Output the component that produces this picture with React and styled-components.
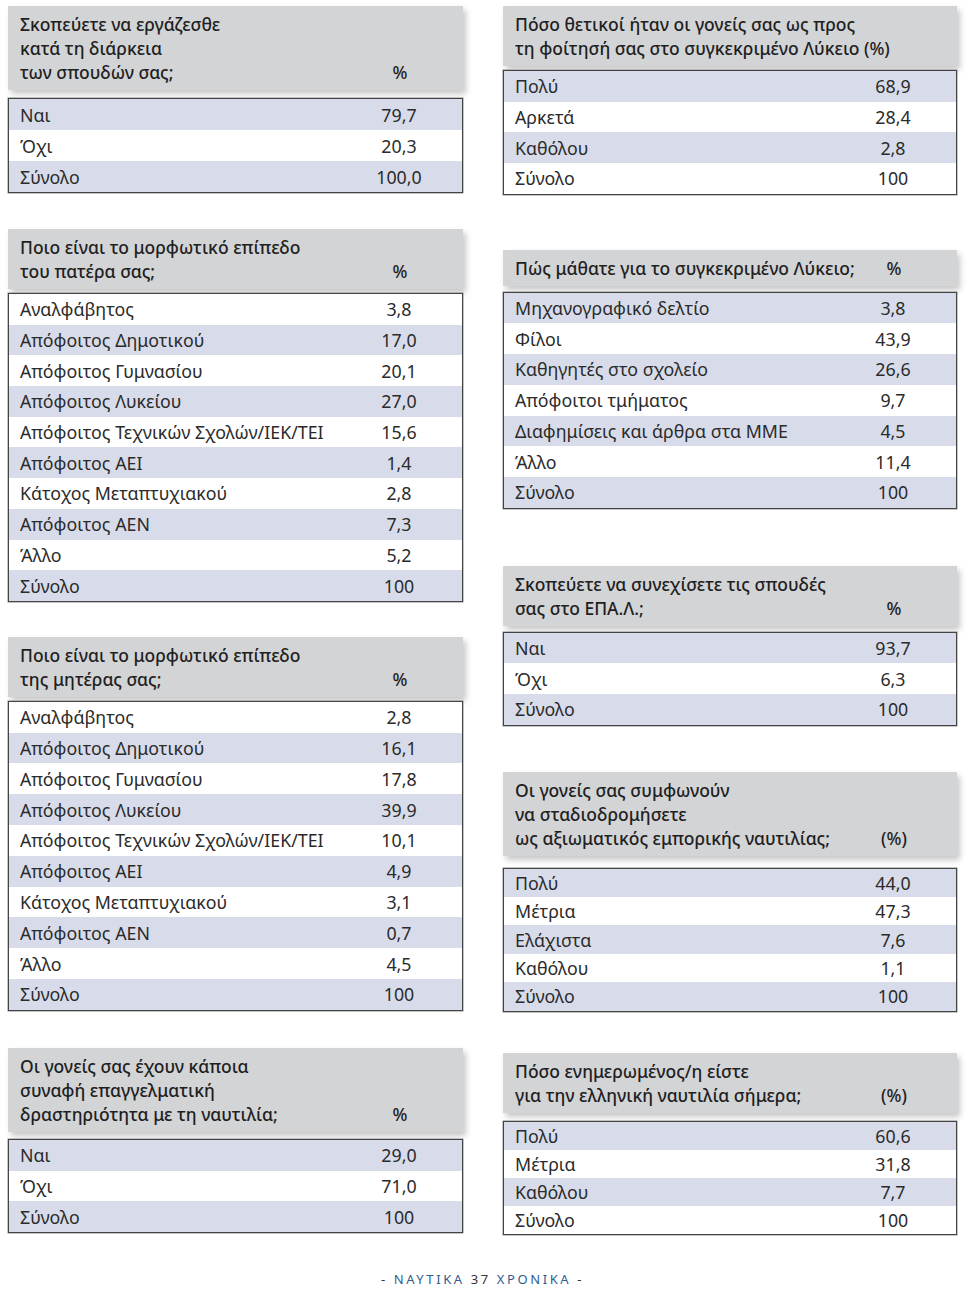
import React from 'react';
import styled, { createGlobalStyle } from 'styled-components';

const GlobalStyle = createGlobalStyle`
  body {
    margin: 0;
    background: #fff;
    font-family: 'Noto Sans', 'Open Sans', sans-serif;
    color: #2a2a2a;
  }
`;

const leftTables = [
  {
    title: ['Σκοπεύετε να εργάζεσθε', 'κατά τη διάρκεια', 'των σπουδών σας;'],
    unit: '%',
    top: 0,
    gap: 8,
    rowH: 31,
    stripe: 0,
    rows: [
      ['Ναι', '79,7'],
      ['Όχι', '20,3'],
      ['Σύνολο', '100,0']
    ]
  },
  {
    title: ['Ποιο είναι το μορφωτικό επίπεδο', 'του πατέρα σας;'],
    unit: '%',
    top: 36,
    gap: 4,
    rowH: 30.7,
    stripe: 1,
    rows: [
      ['Αναλφάβητος', '3,8'],
      ['Απόφοιτος Δημοτικού', '17,0'],
      ['Απόφοιτος Γυμνασίου', '20,1'],
      ['Απόφοιτος Λυκείου', '27,0'],
      ['Απόφοιτος Τεχνικών Σχολών/ΙΕΚ/ΤΕΙ', '15,6'],
      ['Απόφοιτος ΑΕΙ', '1,4'],
      ['Κάτοχος Μεταπτυχιακού', '2,8'],
      ['Απόφοιτος ΑΕΝ', '7,3'],
      ['Άλλο', '5,2'],
      ['Σύνολο', '100']
    ]
  },
  {
    title: ['Ποιο είναι το μορφωτικό επίπεδο', 'της μητέρας σας;'],
    unit: '%',
    top: 35,
    gap: 4,
    rowH: 30.8,
    stripe: 1,
    rows: [
      ['Αναλφάβητος', '2,8'],
      ['Απόφοιτος Δημοτικού', '16,1'],
      ['Απόφοιτος Γυμνασίου', '17,8'],
      ['Απόφοιτος Λυκείου', '39,9'],
      ['Απόφοιτος Τεχνικών Σχολών/ΙΕΚ/ΤΕΙ', '10,1'],
      ['Απόφοιτος ΑΕΙ', '4,9'],
      ['Κάτοχος Μεταπτυχιακού', '3,1'],
      ['Απόφοιτος ΑΕΝ', '0,7'],
      ['Άλλο', '4,5'],
      ['Σύνολο', '100']
    ]
  },
  {
    title: [
      'Οι γονείς σας έχουν κάποια',
      'συναφή επαγγελματική',
      'δραστηριότητα με τη ναυτιλία;'
    ],
    unit: '%',
    top: 37,
    gap: 7,
    rowH: 30.7,
    stripe: 0,
    rows: [
      ['Ναι', '29,0'],
      ['Όχι', '71,0'],
      ['Σύνολο', '100']
    ]
  }
];

const rightTables = [
  {
    title: [
      'Πόσο θετικοί ήταν οι γονείς σας ως προς',
      'τη φοίτησή σας στο συγκεκριμένο Λύκειο (%)'
    ],
    unit: null,
    top: 0,
    gap: 4,
    rowH: 30.7,
    stripe: 0,
    rows: [
      ['Πολύ', '68,9'],
      ['Αρκετά', '28,4'],
      ['Καθόλου', '2,8'],
      ['Σύνολο', '100']
    ]
  },
  {
    title: ['Πώς μάθατε για το συγκεκριμένο Λύκειο;'],
    unit: '%',
    top: 55,
    gap: 6,
    rowH: 30.7,
    stripe: 0,
    rows: [
      ['Μηχανογραφικό δελτίο', '3,8'],
      ['Φίλοι', '43,9'],
      ['Καθηγητές στο σχολείο', '26,6'],
      ['Απόφοιτοι τμήματος', '9,7'],
      ['Διαφημίσεις και άρθρα στα ΜΜΕ', '4,5'],
      ['Άλλο', '11,4'],
      ['Σύνολο', '100']
    ]
  },
  {
    title: ['Σκοπεύετε να συνεχίσετε τις σπουδές', 'σας στο ΕΠΑ.Λ.;'],
    unit: '%',
    top: 57,
    gap: 6,
    rowH: 30.7,
    stripe: 0,
    rows: [
      ['Ναι', '93,7'],
      ['Όχι', '6,3'],
      ['Σύνολο', '100']
    ]
  },
  {
    title: [
      'Οι γονείς σας συμφωνούν',
      'να σταδιοδρομήσετε',
      'ως αξιωματικός εμπορικής ναυτιλίας;'
    ],
    unit: '(%)',
    top: 46,
    gap: 12,
    rowH: 28.4,
    stripe: 0,
    rows: [
      ['Πολύ', '44,0'],
      ['Μέτρια', '47,3'],
      ['Ελάχιστα', '7,6'],
      ['Καθόλου', '1,1'],
      ['Σύνολο', '100']
    ]
  },
  {
    title: ['Πόσο ενημερωμένος/η είστε', 'για την ελληνική ναυτιλία σήμερα;'],
    unit: '(%)',
    top: 41,
    gap: 8,
    rowH: 28,
    stripe: 0,
    rows: [
      ['Πολύ', '60,6'],
      ['Μέτρια', '31,8'],
      ['Καθόλου', '7,7'],
      ['Σύνολο', '100']
    ]
  }
];

const StatTable = ({ table }) => (
  <Card $top={table.top}>
    <Header>
      <Title>
        {table.title.map((line) => (
          <div key={line}>{line}</div>
        ))}
      </Title>
      {table.unit && <Unit>{table.unit}</Unit>}
    </Header>
    <Table $gap={table.gap}>
      {table.rows.map(([label, value], i) => (
        <Row key={label} $h={table.rowH} $striped={i % 2 === table.stripe}>
          <span>{label}</span>
          <Value>{value}</Value>
        </Row>
      ))}
    </Table>
  </Card>
);

const App = () => (
  <>
    <GlobalStyle />
    <Page>
      <Columns>
        <Column>
          {leftTables.map((t) => (
            <StatTable key={t.title.join(' ')} table={t} />
          ))}
        </Column>
        <Column>
          {rightTables.map((t) => (
            <StatTable key={t.title.join(' ')} table={t} />
          ))}
        </Column>
      </Columns>
      <Footer>
        - <Blue>ΝΑΥΤΙΚΑ</Blue> 37 <Blue>ΧΡΟΝΙΚΑ</Blue> -
      </Footer>
    </Page>
  </>
);

const Page = styled.main`
  width: 978px;
  height: 1291px;
  box-sizing: border-box;
  padding: 6px 21px 3px 8px;
  display: flex;
  flex-direction: column;
  overflow: hidden;
`;

const Columns = styled.div`
  display: grid;
  grid-template-columns: 455px 454px;
  column-gap: 40px;
`;

const Column = styled.div`
  display: flex;
  flex-direction: column;
`;

const Card = styled.section`
  margin-top: ${({ $top }) => $top}px;
`;

const Header = styled.div`
  display: flex;
  align-items: flex-end;
  background: #d3d4d6;
  padding: 6px 8px 6px 12px;
  box-shadow: 3px 4px 6px rgba(0, 0, 0, 0.22);
  font-size: 17.5px;
  font-weight: 500;
  line-height: 24px;
  color: #1f1f1f;
`;

const Title = styled.div`
  flex: 1;
  min-width: 0;
  white-space: nowrap;
`;

const Unit = styled.div`
  flex: 0 0 110px;
  text-align: center;
`;

const Table = styled.div`
  margin-top: ${({ $gap }) => $gap}px;
  border: 1px solid #444;
  box-shadow: 0 0 0 0.5px #888;
`;

const Row = styled.div`
  display: grid;
  grid-template-columns: 1fr 110px;
  align-items: center;
  height: ${({ $h }) => $h}px;
  padding: 0 8px 0 11px;
  background: ${({ $striped }) => ($striped ? '#d8dcea' : '#fff')};
  font-size: 17.8px;
  color: #2b2b2b;
`;

const Value = styled.span`
  text-align: center;
`;

const Footer = styled.footer`
  margin-top: auto;
  text-align: center;
  font-size: 13px;
  letter-spacing: 2.6px;
  color: #333;
  line-height: 18px;
`;

const Blue = styled.span`
  color: #2f5d8e;
`;

export default App;
